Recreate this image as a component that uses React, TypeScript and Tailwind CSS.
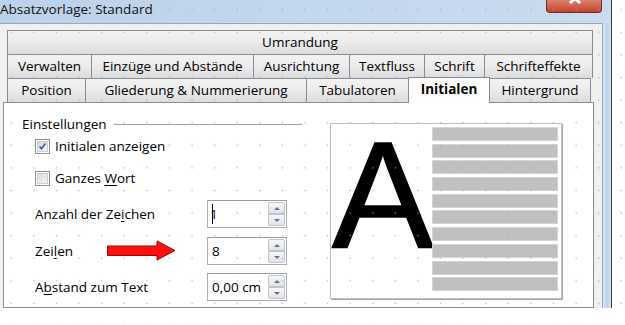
import React from "react";

type TabDef = { label: string; cls: string; selected?: boolean };

const row2: TabDef[] = [
  { label: "Verwalten", cls: "w-[84px] border-l" },
  { label: "Einzüge und Abstände", cls: "w-[162px] border-l" },
  { label: "Ausrichtung", cls: "w-[96px] border-l" },
  { label: "Textfluss", cls: "w-[75px] border-l" },
  { label: "Schrift", cls: "w-[60px] border-l" },
  { label: "Schrifteffekte", cls: "w-[109px] border-l border-r" },
];

const row3: TabDef[] = [
  { label: "Position", cls: "w-[78px] border-l" },
  { label: "Gliederung & Nummerierung", cls: "w-[221px] border-l" },
  { label: "Tabulatoren", cls: "w-[102px] border-l" },
  { label: "Initialen", cls: "w-[82px] border-l border-r", selected: true },
  { label: "Hintergrund", cls: "w-[101px] border-r" },
];

function Tab({ t }: { t: TabDef }) {
  if (t.selected) {
    return (
      <div
        className={`${t.cls} relative z-10 -mt-[1px] flex h-[26px] shrink-0 items-center justify-center border-t border-[#898c95] bg-white pb-[2px] font-bold text-black`}
      >
        {t.label}
      </div>
    );
  }
  return (
    <div
      className={`${t.cls} flex h-[24px] shrink-0 items-center justify-center border-t border-[#898c95] bg-gradient-to-b from-[#f3f3f3] via-[#ebebeb] to-[#dcdcdc] text-black`}
    >
      {t.label}
    </div>
  );
}

function Checkbox({ checked }: { checked?: boolean }) {
  return (
    <div className="flex h-[15px] w-[15px] shrink-0 items-center justify-center border border-[#8e8f8f] bg-white">
      <div className="flex h-[11px] w-[11px] items-center justify-center border border-[#c9cdd4] bg-gradient-to-br from-[#d6d8dc] to-[#f7f7f7]">
        {checked && (
          <svg width="11" height="11" viewBox="0 0 11 11">
            <path d="M2 5.5 L4.3 8.3 L9 1.8" fill="none" stroke="#3d53a0" strokeWidth="1.8" />
          </svg>
        )}
      </div>
    </div>
  );
}

function SpinBtn({ up }: { up?: boolean }) {
  return (
    <div
      className={`flex h-[12px] w-[17px] items-center justify-center border border-[#c0c4cc] bg-gradient-to-b from-[#f7f7f7] to-[#e3e3e3] ${up ? "rounded-t-[2px]" : "rounded-b-[2px]"}`}
    >
      {up ? (
        <div className="h-0 w-0 border-x-[3px] border-b-[3px] border-x-transparent border-b-[#5571ad]" />
      ) : (
        <div className="h-0 w-0 border-x-[3px] border-t-[3px] border-x-transparent border-t-[#5571ad]" />
      )}
    </div>
  );
}

function Spin({ value, caret }: { value: string; caret?: boolean }) {
  return (
    <div className="flex h-[28px] w-[80px] shrink-0 items-center border border-[#abadb3] border-t-[#9a9ca3] bg-white">
      <div className="flex items-center pl-[4px]">
        {caret && <span className="mr-[-3px] h-[20px] w-px bg-black" />}
        <span>{value}</span>
      </div>
      <div className="ml-auto mr-[1px] flex flex-col">
        <SpinBtn up />
        <SpinBtn />
      </div>
    </div>
  );
}

export default function App() {
  return (
    <div className="relative h-[325px] w-[625px] overflow-hidden bg-white font-['Open_Sans','Noto_Sans',sans-serif] text-[13.5px] text-black">
      <div className="flex h-[308px] w-[612px] flex-col overflow-hidden">
        {/* title bar */}
        <div className="flex h-[23px] shrink-0 items-start bg-gradient-to-r from-[#bcd2ea] via-[#c3d7ed] to-[#c9dbef]">
          <span className="mt-[-1px] pl-0 text-[13.5px] leading-[20px] text-[#111]">Absatzvorlage: Standard</span>
          <div className="relative ml-auto mr-[9px] h-[13px] w-[56px] overflow-hidden rounded-b-[4px] border border-t-0 border-[#7a2a20] bg-gradient-to-b from-[#d9826f] to-[#c2402c]">
            <svg className="absolute left-[22px] top-[-6px]" width="12" height="10" viewBox="0 0 12 10">
              <path d="M1 0 L11 9 M11 0 L1 9" stroke="#ffffff" strokeWidth="3" />
            </svg>
          </div>
          <div className="h-full w-px bg-[#3a3a3a]" />
        </div>

        <div className="flex min-h-0 flex-1">
          {/* client area */}
          <div className="flex min-w-0 flex-1 flex-col border-r border-t border-[#9aa6b4] bg-[#f0f0f0] pl-[3px] pt-[6px]">
            <div className="ml-[4px] flex w-[586px]">
              <div className="flex h-[24px] w-[586px] items-center justify-center border-l border-r border-t border-[#898c95] bg-gradient-to-b from-[#f3f3f3] via-[#ebebeb] to-[#dcdcdc]">
                Umrandung
              </div>
            </div>
            <div className="ml-[4px] flex w-[586px]">
              {row2.map((t) => (
                <Tab key={t.label} t={t} />
              ))}
            </div>
            <div className="ml-[4px] flex h-[24px] w-[586px] items-start">
              {row3.map((t) => (
                <Tab key={t.label} t={t} />
              ))}
            </div>
            {/* panel */}
            <div className="flex w-[591px] flex-1 border border-[#898c95] bg-white">
              <div className="flex w-[298px] shrink-0 flex-col pl-[18px]">
                <div className="mt-[12px] flex h-[18px] w-[280px] items-center gap-[7px]">
                  <span className="shrink-0 leading-[18px]">Einstellungen</span>
                  <div className="h-px grow bg-[#9fa3a9]" />
                </div>
                <div className="mt-[5px] flex h-[16px] items-center pl-[13px]">
                  <Checkbox checked />
                  <span className="ml-[5px]">
                    Initialen anzei<u className="underline-offset-2">g</u>en
                  </span>
                </div>
                <div className="mt-[16px] flex h-[16px] items-center pl-[13px]">
                  <Checkbox />
                  <span className="ml-[5px]">
                    Ganzes <u className="underline-offset-2">W</u>ort
                  </span>
                </div>
                <div className="mt-[14px] flex h-[28px] items-center pl-[13px]">
                  <span className="w-[172px] shrink-0">
                    Anzahl der Ze<u className="underline-offset-2">i</u>chen
                  </span>
                  <Spin value="1" caret />
                </div>
                <div className="mt-[9px] flex h-[28px] items-center pl-[13px]">
                  <span className="w-[72px] shrink-0">
                    Zei<u className="underline-offset-2">l</u>en
                  </span>
                  <svg width="100" height="22" viewBox="0 0 100 22" className="w-[100px] shrink-0">
                    <polygon
                      points="0.5,6 50,6 50,1 68,10.5 50,20 50,15.5 0.5,15.5"
                      fill="#ff1010"
                      stroke="#a00000"
                      strokeWidth="1"
                    />
                  </svg>
                  <Spin value="8" />
                </div>
                <div className="mt-[8px] flex h-[28px] items-center pl-[13px]">
                  <span className="w-[172px] shrink-0">
                    A<u className="underline-offset-2">b</u>stand zum Text
                  </span>
                  <Spin value="0,00 cm" />
                </div>
              </div>
              {/* preview */}
              <div className="ml-[28px] mt-[20px] flex h-[176px] w-[232px] border border-[#bdbdbd] shadow-[1px_1px_0_#a9a9a9]">
                <div className="w-[101px] shrink-0 overflow-visible">
                  <div className="-mt-[5px] ml-[1px] font-['Liberation_Sans',Arial,sans-serif] text-[152px] leading-none [-webkit-text-stroke:1.5px_black]">
                    A
                  </div>
                </div>
                <div className="mt-[3px] flex w-[126px] flex-col gap-[2.7px]">
                  {Array.from({ length: 10 }).map((_, i) => (
                    <div key={i} className="h-[14px] border border-[#d4d4d4] bg-[#c0c0c0]" />
                  ))}
                </div>
              </div>
            </div>
          </div>
          {/* right glass frame */}
          <div className="w-[8px] bg-gradient-to-r from-[#dbe9f7] via-[#bcd3ec] to-[#d3e4f5]" />
          <div className="w-px bg-[#3a3a3a]" />
        </div>
      </div>
      {/* grid dots overlay */}
      <div className="pointer-events-none absolute inset-0 bg-[radial-gradient(circle,#a8a8a8_0.6px,transparent_1.1px)] bg-[size:22.6px_22.6px] bg-[position:0px_-1.6px] opacity-80" />
    </div>
  );
}
